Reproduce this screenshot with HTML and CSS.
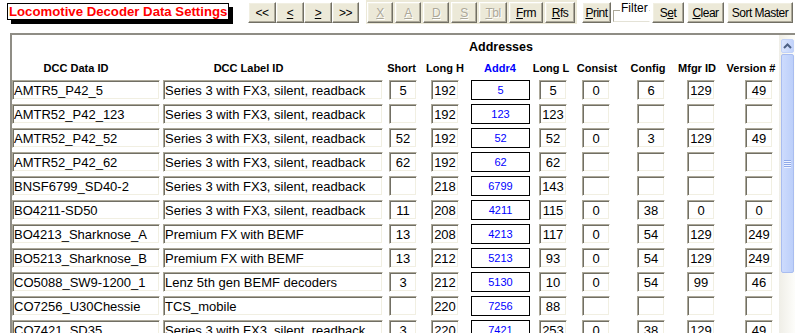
FILE: index.html
```html
<!DOCTYPE html>
<html lang="en">
<head>
  <meta charset="UTF-8">
  <title>Locomotive Decoder Data Settings</title>
  <link rel="stylesheet" href="styles.css">
</head>
<body>
  <div class="toolbar">
    <div class="title">Locomotive Decoder Data Settings</div>

    <div class="nav">
      <button class="btn">&lt;&lt;</button>
      <button class="btn"><u>&lt;</u></button>
      <button class="btn"><u>&gt;</u></button>
      <button class="btn">&gt;&gt;</button>
    </div>

    <div class="edit-group">
      <button class="btn b-edit" disabled><u>X</u></button>
      <button class="btn b-edit" disabled><u>A</u></button>
      <button class="btn b-edit" disabled><u>D</u></button>
      <button class="btn b-edit" disabled><u>S</u></button>
      <button class="btn b-tbl" disabled><u>T</u>bl</button>
      <button class="btn b-frm"><u>F</u>rm</button>
      <button class="btn b-rfs"><u>R</u>fs</button>
    </div>

    <button class="btn b-print"><u>P</u>rint</button>
    <div class="filter"><span class="legend">Filter</span></div>
    <button class="btn b-set">S<u>e</u>t</button>
    <button class="btn b-clear"><u>C</u>lear</button>
    <button class="btn b-sort">Sort Master</button>
  </div>

  <div class="frame">
    <div class="sheet" id="sheet">
      <div class="group-title">Addresses</div>
      <div class="row head">
        <div>DCC Data ID</div>
        <div>DCC Label ID</div>
        <div>Short</div>
        <div>Long H</div>
        <div class="addr">Addr4</div>
        <div>Long L</div>
        <div>Consist</div>
        <div>Config</div>
        <div>Mfgr ID</div>
        <div>Version #</div>
      </div>
    </div>

    <div class="scrollbar">
      <div class="sb-btn">
        <svg width="9" height="6" viewBox="0 0 9 6"><polyline points="1,5 4.5,1.5 8,5" fill="none" stroke="#4d6185" stroke-width="2"/></svg>
      </div>
      <div class="sb-thumb"><span></span><span></span><span></span><span></span></div>
    </div>
  </div>

  <script>
    const decoders = [
      ['AMTR5_P42_5', 'Series 3 with FX3, silent, readback', '5', '192', '5', '5', '0', '6', '129', '49'],
      ['AMTR52_P42_123', 'Series 3 with FX3, silent, readback', '', '192', '123', '123', '', '', '', ''],
      ['AMTR52_P42_52', 'Series 3 with FX3, silent, readback', '52', '192', '52', '52', '0', '3', '129', '49'],
      ['AMTR52_P42_62', 'Series 3 with FX3, silent, readback', '62', '192', '62', '62', '', '', '', ''],
      ['BNSF6799_SD40-2', 'Series 3 with FX3, silent, readback', '', '218', '6799', '143', '', '', '', ''],
      ['BO4211-SD50', 'Series 3 with FX3, silent, readback', '11', '208', '4211', '115', '0', '38', '0', '0'],
      ['BO4213_Sharknose_A', 'Premium FX with BEMF', '13', '208', '4213', '117', '0', '54', '129', '249'],
      ['BO5213_Sharknose_B', 'Premium FX with BEMF', '13', '212', '5213', '93', '0', '54', '129', '249'],
      ['CO5088_SW9-1200_1', 'Lenz 5th gen BEMF decoders', '3', '212', '5130', '10', '0', '54', '99', '46'],
      ['CO7256_U30Chessie', 'TCS_mobile', '', '220', '7256', '88', '', '', '', ''],
      ['CO7421_SD35', 'Series 3 with FX3, silent, readback', '3', '220', '7421', '253', '0', '38', '129', '49']
    ];

    function fieldClass(i) {
      if (i === 0) return 'f-id';
      if (i === 1) return 'f-label';
      if (i === 4) return 'f-addr';
      return 'f-num';
    }

    const sheet = document.getElementById('sheet');
    for (const rec of decoders) {
      const row = document.createElement('div');
      row.className = 'row';
      rec.forEach((val, i) => {
        const input = document.createElement('input');
        input.type = 'text';
        input.value = val;
        input.className = fieldClass(i);
        row.appendChild(input);
      });
      sheet.appendChild(row);
    }
  </script>
</body>
</html>
```

FILE: styles.css
```css
* {
  box-sizing: border-box;
}
body {
  margin: 0;
  width: 795px;
  height: 333px;
  overflow: hidden;
  background: #fff;
  color: #000;
  font-family: "Liberation Sans", Arial, sans-serif;
  font-size: 13px;
}

/* toolbar */
.toolbar {
  display: flex;
  align-items: flex-start;
  height: 33px;
}
.title {
  flex-shrink: 0;
  margin: 3px 0 0 7px;
  width: 222px;
  height: 17px;
  padding-left: 1px;
  border: 1px solid #000;
  background: #fff;
  box-shadow: 4px 4px 0 #000;
  color: #f00;
  font-size: 13.2px;
  font-weight: bold;
  line-height: 15px;
  white-space: nowrap;
  overflow: hidden;
}
.btn {
  flex-shrink: 0;
  height: 21px;
  margin: 0;
  padding: 0;
  background: #ece9d8;
  border: 1px solid;
  border-color: #fff #716f64 #716f64 #fff;
  box-shadow: inset -1px -1px #aca899, inset 1px 1px #f1efe2;
  color: #000;
  font-family: "Liberation Sans", Arial, sans-serif;
  font-size: 12px;
  letter-spacing: -0.5px;
  white-space: nowrap;
}
.btn:disabled {
  color: #aca899;
  text-shadow: 1px 1px #fff;
}
.nav {
  display: flex;
  flex-shrink: 0;
  margin: 2px 0 0 19px;
}
.nav .btn {
  width: 28px;
}
.nav .btn:last-child {
  width: 27px;
}
.edit-group {
  display: flex;
  flex-shrink: 0;
  gap: 2px;
  width: 212px;
  height: 25px;
  margin-left: 7px;
  padding: 2px 0 0 1px;
  background: #ece9d8;
  border-right: 1px solid #fff;
  border-bottom: 1px solid #fff;
}
.b-edit {
  width: 26px;
}
.b-tbl {
  width: 28px;
}
.b-frm {
  width: 34px;
}
.b-rfs {
  width: 30px;
}
.b-print {
  width: 29px;
  margin: 2px 0 0 4px;
}
.filter {
  flex-shrink: 0;
  width: 37px;
  height: 12px;
  margin: 10px 0 0 2px;
  padding-left: 6px;
  border: 1px solid;
  border-color: #aca899 #fff #e4e2d6 #aca899;
}
.filter .legend {
  display: block;
  width: fit-content;
  margin-top: -9px;
  padding: 0 1px;
  background: #fff;
  font-size: 12px;
  line-height: 12px;
}
.b-set {
  width: 32px;
  margin: 2px 0 0 2px;
}
.b-clear {
  width: 37px;
  margin: 2px 0 0 3px;
}
.b-sort {
  width: 66px;
  margin: 2px 0 0 3px;
}

/* data frame */
.frame {
  display: flex;
  height: 300px;
  margin-left: 10px;
  border-top: 2px solid #8f8d85;
  border-left: 2px solid #8f8d85;
  overflow: hidden;
}
.sheet {
  flex: 1;
}
.group-title {
  height: 25px;
  padding-left: 211px;
  font-size: 12.5px;
  font-weight: bold;
  line-height: 25px;
  text-align: center;
}
.row {
  display: grid;
  grid-template-columns: 151px 226px 42px 40px 68px 43px 55px 50px 58px 34px;
  height: 20px;
  margin-bottom: 4px;
}
.head {
  height: 16px;
  margin-bottom: 4px;
  font-size: 11px;
  font-weight: bold;
  line-height: 16px;
}
.head div {
  display: flex;
  justify-content: center;
  white-space: nowrap;
}
.head div:nth-child(1) { width: 128px; }
.head div:nth-child(2) { width: 171px; }
.head div:nth-child(3) { width: 25px; }
.head div:nth-child(4) { width: 28px; }
.head div:nth-child(5) { width: 58px; }
.head div:nth-child(6) { width: 24px; }
.head div:nth-child(7) { width: 30px; }
.head div:nth-child(8) { width: 22px; }
.head div:nth-child(9) { width: 20px; }
.head div:nth-child(10) { width: 12px; }
.head .addr {
  color: #00f;
}
.row input {
  width: 28px;
  height: 20px;
  margin: 0;
  padding: 0 1px;
  border: 1px solid;
  border-color: #aca899 #fff #fff #aca899;
  box-shadow: inset 1px 1px #716f64, inset -1px -1px #f1efe2;
  background: #fff;
  color: #000;
  font-family: "Liberation Sans", Arial, sans-serif;
  font-size: 13px;
  text-align: center;
  outline: none;
}
.row input.f-id {
  width: 148px;
  text-align: left;
}
.row input.f-label {
  width: 220px;
  text-align: left;
}
.row input.f-addr {
  width: 59px;
  border: 1px solid #000;
  box-shadow: none;
  color: #00f;
  font-size: 11px;
}

/* scrollbar */
.scrollbar {
  flex-shrink: 0;
  width: 16px;
  padding: 4px 1px 0 2px;
  background: linear-gradient(to right, #efeee7, #fdfdfa);
}
.sb-btn {
  display: flex;
  align-items: center;
  justify-content: center;
  height: 14px;
  border: 1px solid #c2d2f8;
  border-radius: 2px;
  background: linear-gradient(to right, #dbe5fd, #c2d3fb);
}
.sb-thumb {
  display: flex;
  flex-direction: column;
  align-items: center;
  justify-content: center;
  gap: 1px;
  height: 219px;
  margin-top: 1px;
  border: 1px solid #a9bdf0;
  border-radius: 2px;
  background: linear-gradient(to right, #cddbfd, #bccffa);
}
.sb-thumb span {
  width: 7px;
  height: 1px;
  background: #8ea8e8;
  box-shadow: 0 1px #eef3ff;
}
```
